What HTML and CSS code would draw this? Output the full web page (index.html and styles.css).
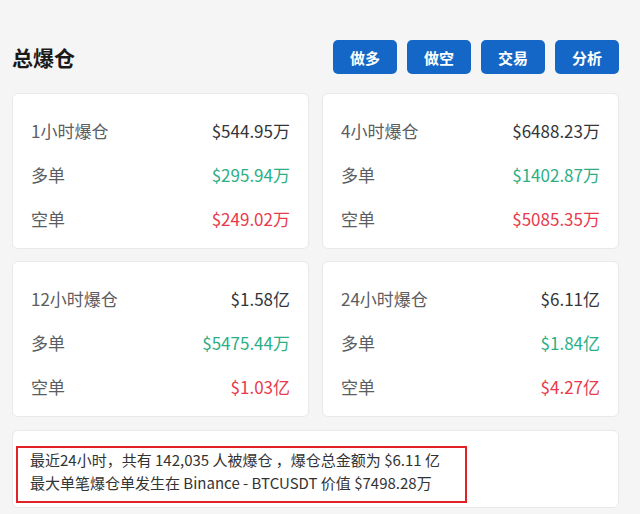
FILE: index.html
```html
<!DOCTYPE html>
<html lang="zh-CN">
<head>
    <meta charset="UTF-8">
    <meta name="viewport" content="width=device-width, initial-scale=1.0">
    <title>总爆仓</title>
    <link rel="stylesheet" href="styles.css">
</head>
<body>
    <div class="page">
        <div class="header">
            <h2 class="titulo">总爆仓</h2>
            <div class="botones">
                <button class="btn">做多</button>
                <button class="btn">做空</button>
                <button class="btn">交易</button>
                <button class="btn">分析</button>
            </div>
        </div>

        <div class="grid">
            <div class="card">
                <div class="fila"><span class="label">1小时爆仓</span><span class="valor">$544.95万</span></div>
                <div class="fila"><span class="label">多单</span><span class="valor verde">$295.94万</span></div>
                <div class="fila"><span class="label">空单</span><span class="valor rojo">$249.02万</span></div>
            </div>
            <div class="card">
                <div class="fila"><span class="label">4小时爆仓</span><span class="valor">$6488.23万</span></div>
                <div class="fila"><span class="label">多单</span><span class="valor verde">$1402.87万</span></div>
                <div class="fila"><span class="label">空单</span><span class="valor rojo">$5085.35万</span></div>
            </div>
            <div class="card">
                <div class="fila"><span class="label">12小时爆仓</span><span class="valor">$1.58亿</span></div>
                <div class="fila"><span class="label">多单</span><span class="valor verde">$5475.44万</span></div>
                <div class="fila"><span class="label">空单</span><span class="valor rojo">$1.03亿</span></div>
            </div>
            <div class="card">
                <div class="fila"><span class="label">24小时爆仓</span><span class="valor">$6.11亿</span></div>
                <div class="fila"><span class="label">多单</span><span class="valor verde">$1.84亿</span></div>
                <div class="fila"><span class="label">空单</span><span class="valor rojo">$4.27亿</span></div>
            </div>
        </div>

        <div class="resumen">
            <div class="marcado">
                <p>最近24小时，共有 142,035 人被爆仓 ，爆仓总金额为 $6.11 亿</p>
                <p>最大单笔爆仓单发生在 Binance - BTCUSDT 价值 $7498.28万</p>
            </div>
        </div>
    </div>
</body>
</html>
```

FILE: styles.css
```css
* {
    margin: 0;
    padding: 0;
    box-sizing: border-box;
}

body {
    background: #f5f5f5;
    color: #333;
    font-family: "Noto Sans CJK SC", "Noto Sans", sans-serif;
}

.page {
    padding: 40px 21px 0 12px;
}

.header {
    display: flex;
    justify-content: space-between;
    align-items: center;
    margin-bottom: 19px;
}

.titulo {
    font-size: 21px;
    font-weight: 700;
    color: #1a1a1a;
    line-height: 34px;
}

.botones {
    display: flex;
    gap: 10px;
}

.btn {
    width: 64px;
    height: 34px;
    border: none;
    border-radius: 5px;
    background: #1467c6;
    color: #fff;
    font-family: inherit;
    font-size: 15px;
    font-weight: 700;
}

.grid {
    display: grid;
    grid-template-columns: 297px 297px;
    justify-content: space-between;
    row-gap: 12px;
}

.card {
    background: #fff;
    border: 1px solid #e9e9e9;
    border-radius: 6px;
    padding: 14px 18px 8px 18px;
    height: 156px;
}

.fila {
    display: flex;
    justify-content: space-between;
    align-items: center;
    height: 44px;
    font-size: 17px;
}

.label {
    color: #5a5d62;
}

.valor {
    color: #33363a;
}

.verde { color: #2daf86; }
.rojo { color: #e83a4c; }

.resumen {
    margin-top: 13px;
    background: #fff;
    border: 1px solid #e9e9e9;
    border-radius: 6px;
    padding: 15px 0 4px 3px;
    height: 78px;
}

.marcado {
    width: 451px;
    height: 57px;
    border: 2px solid #e02226;
    padding: 0 0 0 12px;
    font-size: 15px;
    line-height: 23px;
    color: #333;
}
```
